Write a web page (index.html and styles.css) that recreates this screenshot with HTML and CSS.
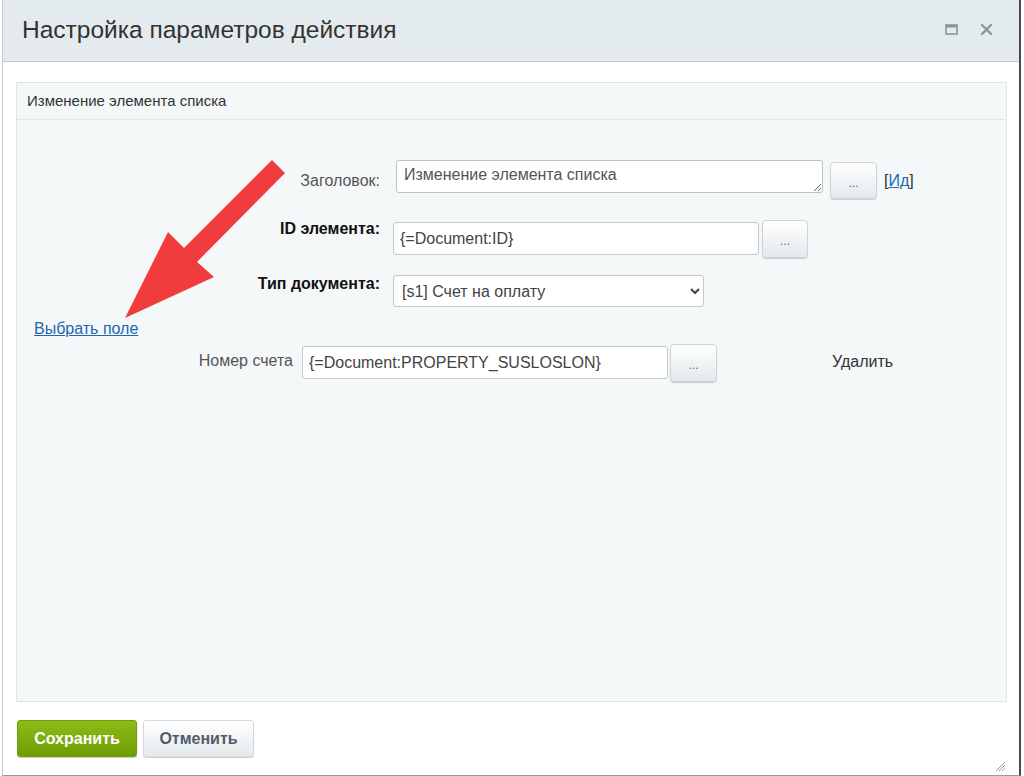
FILE: index.html
```html
<!DOCTYPE html>
<html lang="ru">
<head>
<meta charset="utf-8">
<title>Настройка параметров действия</title>
<link rel="stylesheet" href="styles.css">
</head>
<body>
<div class="dialog">
  <div class="dlg-head">
    <div class="dlg-title">Настройка параметров действия</div>
    <div class="dlg-icons">
      <svg class="ico" width="13" height="11" viewBox="0 0 13 11"><rect x="1" y="1" width="11" height="9" fill="none" stroke="#8c959a" stroke-width="1.6"/><rect x="1" y="1" width="11" height="2.5" fill="#8c959a"/></svg>
      <svg class="ico" width="13" height="13" viewBox="0 0 13 13"><path d="M2 2 L11 11 M11 2 L2 11" stroke="#8c959a" stroke-width="2.4" stroke-linecap="round"/></svg>
    </div>
  </div>
  <div class="dlg-body">
    <div class="panel">
      <div class="panel-head">Изменение элемента списка</div>
      <div class="form">
        <div class="row row1">
          <div class="label lbl1">Заголовок:</div>
          <textarea class="ta">Изменение элемента списка</textarea>
          <button class="dots b1">...</button>
          <span class="idlink">[<a href="#">Ид</a>]</span>
        </div>
        <div class="row row2">
          <div class="label bold lbl2">ID элемента:</div>
          <input class="inp inp2" type="text" value="{=Document:ID}">
          <button class="dots b2">...</button>
        </div>
        <div class="row row3">
          <div class="label bold lbl3">Тип документа:</div>
          <select class="sel"><option>[s1] Счет на оплату</option></select>
        </div>
        <div class="row linkrow"><a href="#" class="pick">Выбрать поле</a></div>
        <div class="row row4">
          <div class="label lbl4">Номер счета</div>
          <input class="inp inp4" type="text" value="{=Document:PROPERTY_SUSLOSLON}">
          <button class="dots b4">...</button>
          <span class="del">Удалить</span>
        </div>
      </div>
    </div>
    <div class="footer">
      <button class="btn save">Сохранить</button>
      <button class="btn cancel">Отменить</button>
      <svg class="grip" width="12" height="12" viewBox="0 0 12 12"><path d="M11 2 L2 11 M11 5 L5 11 M11 8 L8 11" stroke="#999" stroke-width="1"/></svg>
    </div>
  </div>
  <svg class="arrow" width="300" height="340" viewBox="0 0 300 340"><polygon points="272,160 285,173 197,262 214,277 125,318 168,232 184,248" fill="#f03c3c"/></svg>
</div>
</body>
</html>
```
FILE: styles.css
```css
* { box-sizing: border-box; }
html, body { margin: 0; padding: 0; background: #fff; }
body { font-family: "Liberation Sans", Arial, sans-serif; }
.dialog {
  position: relative;
  margin-left: 2px;
  width: 1019px;
  height: 776px;
  border-left: 1px solid #c9c9c9;
  border-right: 2px solid #4a4a4a;
  border-bottom: 1px solid #9a9a9a;
  display: flex;
  flex-direction: column;
}
.dlg-head {
  height: 62px;
  background: #e4ebee;
  border-bottom: 1px solid #c3cacd;
  display: flex;
  align-items: center;
  padding: 0 0 2px 19px;
}
.dlg-title { font-size: 24.5px; color: #333; flex: 1; }
.dlg-icons { display: flex; align-items: center; gap: 22px; margin-right: 26px; }
.ico { display: block; }
.dlg-body { flex: 1; padding: 20px 12px 0 13px; display: flex; flex-direction: column; }
.panel {
  height: 620px;
  border: 1px solid #dfe5e8;
  background: #f5f8f9;
}
.panel-head {
  height: 37px;
  line-height: 35px;
  border-bottom: 1px solid #e1e6e9;
  padding-left: 10px;
  font-size: 15px;
  color: #333;
}
.form { padding-top: 40px; }
.row { display: flex; align-items: flex-start; }
.label { font-size: 16px; color: #555; text-align: right; }
.bold { font-weight: bold; color: #111; }
.lbl1, .lbl2, .lbl3 { width: 363px; }
.lbl1 { margin-top: 12px; }
.lbl2 { margin-top: 0; }
.lbl3 { margin-top: 0; }
.ta {
  margin-left: 16px;
  width: 427px; height: 33px;
  border: 1px solid #bcc3c7; border-radius: 3px;
  font-family: "Liberation Sans", Arial, sans-serif;
  font-size: 16px; color: #555;
  padding: 5px 7px;
  background: #fff;
}
.inp {
  height: 33px;
  border: 1px solid #c3c9cd; border-radius: 3px;
  font-family: "Liberation Sans", Arial, sans-serif;
  font-size: 16px; color: #444;
  padding: 0 6px;
  background: #fff;
  margin-top: 2px;
}
.inp2 { margin-left: 13px; width: 366px; }
.dots {
  font-family: "Liberation Sans", Arial, sans-serif;
  font-size: 12px; color: #666;
  border: 1px solid #cdd3d6; border-radius: 4px;
  background: linear-gradient(#ffffff, #e3e9ec);
  box-shadow: 0 1px 1px rgba(0,0,0,0.18);
  padding: 4px 0 0;
}
.b1 { margin-left: 7px; width: 47px; height: 37px; margin-top: 2px; }
.b2 { margin-left: 3px; width: 46px; height: 38px; }
.b4 { margin-left: 2px; width: 47px; height: 38px; }
.idlink { margin-left: 7px; margin-top: 12px; font-size: 16px; color: #333; }
.idlink a { color: #2067b0; }
.row2 { margin-top: 21px; }
.row3 { margin-top: 17px; }
.sel {
  margin-left: 13px;
  width: 311px; height: 32px;
  border: 1px solid #c3c9cd; border-radius: 3px;
  font-family: "Liberation Sans", Arial, sans-serif;
  font-size: 16px; color: #444;
  background: #fff;
  padding: 0 4px;
}
.linkrow { margin-top: 13px; padding-left: 17px; height: 18px; }
.pick { font-size: 16px; color: #2067b0; }
.row4 { margin-top: 6px; }
.lbl4 { width: 276px; margin-top: 8px; }
.inp4 { margin-left: 9px; width: 366px; }
.del { margin-left: 115px; margin-top: 9px; font-size: 16px; color: #333; }
.footer { display: flex; align-items: flex-start; padding-top: 18px; padding-left: 1px; flex: 1; }
.btn {
  height: 37px;
  font-family: "Liberation Sans", Arial, sans-serif;
  font-size: 16px; font-weight: bold;
  border-radius: 3px;
  padding: 0;
}
.save {
  width: 120px;
  color: #fff;
  border: 1px solid #6f9a0b;
  background: linear-gradient(#8dbb17, #6f9c04);
  box-shadow: 0 1px 1px rgba(0,0,0,0.2);
}
.cancel {
  margin-left: 6px;
  width: 111px;
  color: #535c69;
  border: 1px solid #d3d9dc;
  background: linear-gradient(#ffffff, #e4eaed);
  box-shadow: 0 1px 1px rgba(0,0,0,0.2);
}
.grip { margin-left: auto; align-self: flex-end; margin-bottom: 3px; margin-right: 1px; }
.arrow { position: absolute; left: -3px; top: 0; pointer-events: none; }
```
